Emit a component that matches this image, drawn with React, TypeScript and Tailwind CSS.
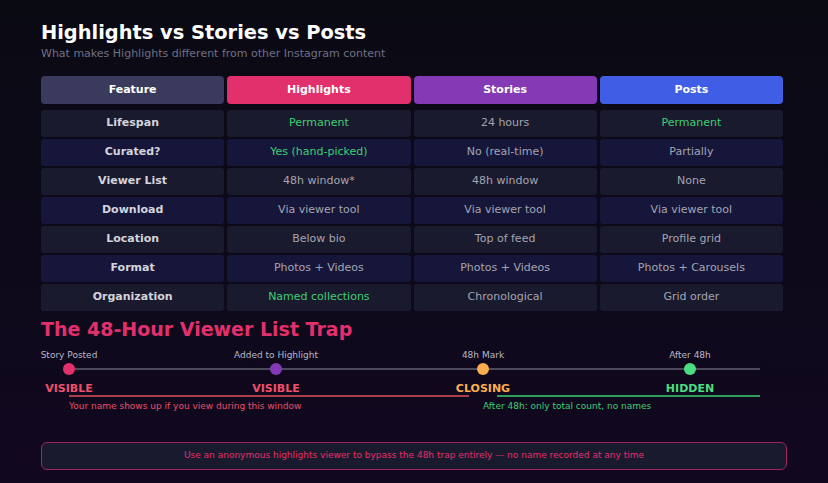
import React from 'react';

type Tone = 'green' | 'gray';

const ROWS: { feature: string; cells: [string, Tone][] }[] = [
  { feature: 'Lifespan', cells: [['Permanent', 'green'], ['24 hours', 'gray'], ['Permanent', 'green']] },
  { feature: 'Curated?', cells: [['Yes (hand-picked)', 'green'], ['No (real-time)', 'gray'], ['Partially', 'gray']] },
  { feature: 'Viewer List', cells: [['48h window*', 'gray'], ['48h window', 'gray'], ['None', 'gray']] },
  { feature: 'Download', cells: [['Via viewer tool', 'gray'], ['Via viewer tool', 'gray'], ['Via viewer tool', 'gray']] },
  { feature: 'Location', cells: [['Below bio', 'gray'], ['Top of feed', 'gray'], ['Profile grid', 'gray']] },
  { feature: 'Format', cells: [['Photos + Videos', 'gray'], ['Photos + Videos', 'gray'], ['Photos + Carousels', 'gray']] },
  { feature: 'Organization', cells: [['Named collections', 'green'], ['Chronological', 'gray'], ['Grid order', 'gray']] },
];

const HEADERS = [
  { label: 'Feature', bg: 'bg-[#3a3a5c]' },
  { label: 'Highlights', bg: 'bg-[#e1306c]' },
  { label: 'Stories', bg: 'bg-[#833ab4]' },
  { label: 'Posts', bg: 'bg-[#405de6]' },
];

const STEPS = [
  { x: 69, label: 'Story Posted', dot: '#e1306c', status: 'VISIBLE', color: '#f0506a' },
  { x: 276, label: 'Added to Highlight', dot: '#833ab4', status: 'VISIBLE', color: '#f0506a' },
  { x: 483, label: '48h Mark', dot: '#fbad50', status: 'CLOSING', color: '#fbad50' },
  { x: 690, label: 'After 48h', dot: '#4ade80', status: 'HIDDEN', color: '#4ade80' },
];

function Timeline() {
  // drawn in page x coordinates, the svg spans the whole width
  return (
    <svg width="828" height="72" viewBox="0 345 828 72" className="block -mx-[41px] mt-[4px]">
      {STEPS.map((s) => (
        <text key={s.label} x={s.x} y={358} textAnchor="middle" fontSize="9" fill="#b8b8c8">
          {s.label}
        </text>
      ))}
      <line x1="69" y1="369" x2="760" y2="369" stroke="#4a4a5a" strokeWidth="2" />
      {STEPS.map((s) => (
        <circle key={s.x} cx={s.x} cy={369} r={6} fill={s.dot} />
      ))}
      {STEPS.map((s) => (
        <text key={s.x} x={s.x} y={392} textAnchor="middle" fontSize="11" fontWeight="bold" fill={s.color}>
          {s.status}
        </text>
      ))}
      <line x1="69" y1="396" x2="469" y2="396" stroke="#e0505e" strokeWidth="1.5" />
      <line x1="497" y1="396" x2="760" y2="396" stroke="#3ecf72" strokeWidth="1.5" />
      <text x="69" y="409" fontSize="9" fill="#e8506a">
        Your name shows up if you view during this window
      </text>
      <text x="483" y="409" fontSize="9" fill="#3ecf72">
        After 48h: only total count, no names
      </text>
    </svg>
  );
}

export default function App() {
  return (
    <div
      className="w-[828px] h-[483px] overflow-hidden bg-gradient-to-b from-[#0a0a13] to-[#110820] px-[41px] pt-[21px]"
      style={{ fontFamily: '"DejaVu Sans", sans-serif' }}
    >
      <h1 className="text-[19.4px] leading-[24px] font-bold text-white">Highlights vs Stories vs Posts</h1>
      <p className="text-[11px] leading-[15px] text-[#707085] mt-[1px]">
        What makes Highlights different from other Instagram content
      </p>

      <div className="w-[742px] mt-[15px] grid grid-cols-4 gap-x-[3px]">
        {HEADERS.map((h) => (
          <div
            key={h.label}
            className={`${h.bg} h-[28px] rounded-[4px] flex items-center justify-center text-[11px] font-bold text-white`}
          >
            {h.label}
          </div>
        ))}
      </div>

      <div className="w-[742px] mt-[6px] flex flex-col gap-[2px]">
        {ROWS.map((r, i) => {
          const bg = i % 2 === 0 ? 'bg-[#1a1a2e]' : 'bg-[#16163a]';
          return (
            <div key={r.feature} className="grid grid-cols-4 gap-x-[3px]">
              <div className={`${bg} h-[27px] rounded-[3px] flex items-center justify-center text-[11px] font-bold text-[#d4d4dc]`}>
                {r.feature}
              </div>
              {r.cells.map(([t, tone], j) => (
                <div
                  key={j}
                  className={`${bg} h-[27px] rounded-[3px] flex items-center justify-center text-[11px] ${
                    tone === 'green' ? 'text-[#3ecf72]' : 'text-[#a4a4b0]'
                  }`}
                >
                  {t}
                </div>
              ))}
            </div>
          );
        })}
      </div>

      <h2 className="text-[19px] leading-[24px] font-bold text-[#e1306c] mt-[6px]">The 48-Hour Viewer List Trap</h2>

      <Timeline />

      <div className="w-[746px] h-[28px] mt-[25px] rounded-[6px] border border-[#a0245a] bg-[#1a1a2e] flex items-center justify-center text-[9px] text-[#e1306c]">
        Use an anonymous highlights viewer to bypass the 48h trap entirely — no name recorded at any time
      </div>
    </div>
  );
}
